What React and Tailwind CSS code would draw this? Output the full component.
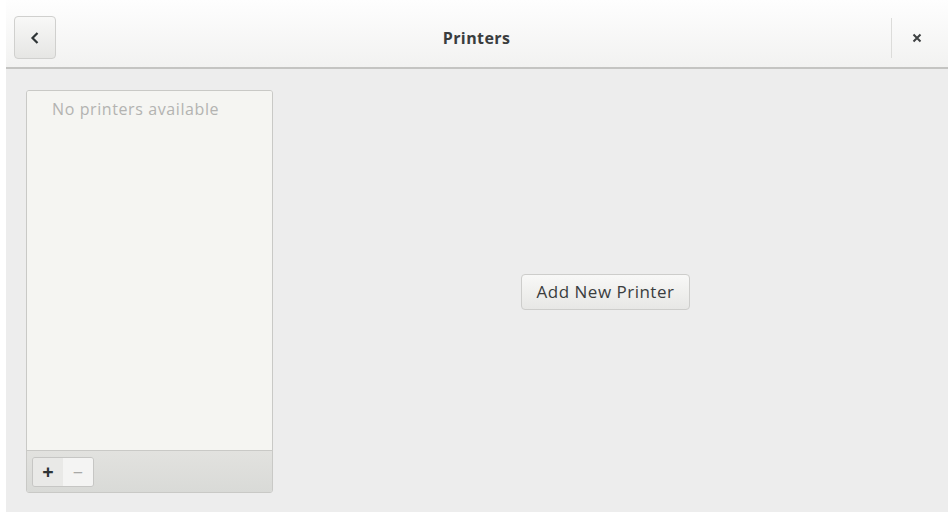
import React from "react";

function BackIcon() {
  return (
    <svg width="10" height="14" viewBox="0 0 10 14">
      <path d="M7.5 2 L2.5 7 L7.5 12" fill="none" stroke="#2e3436" strokeWidth="2.2" />
    </svg>
  );
}

function CloseIcon() {
  return (
    <svg width="10" height="10" viewBox="0 0 10 10">
      <path d="M1.5 1.5 L8.5 8.5 M8.5 1.5 L1.5 8.5" stroke="#3f4243" strokeWidth="2" />
    </svg>
  );
}

export default function App() {
  return (
    <div
      className="w-[948px] h-[512px] bg-white overflow-hidden flex"
      style={{ fontFamily: '"Open Sans", "Noto Sans", sans-serif' }}
    >
      <div className="ml-[6px] flex-1 flex flex-col">
        {/* header bar */}
        <div className="h-[69px] shrink-0 flex items-center pt-[8px] bg-gradient-to-b from-[#fefefe] to-[#f2f2f1] border-b-2 border-[#c4c4c2]">
          <div className="ml-[8px] w-[42px] h-[43px] rounded-[4px] border border-[#d0d0ce] bg-gradient-to-b from-[#f8f8f7] to-[#e6e6e4] flex items-center justify-center">
            <BackIcon />
          </div>
          <div className="flex-1 text-center text-[16px] tracking-[0.4px] font-bold text-[#3a3d3e] pl-[6px]">Printers</div>
          <div className="w-px h-[40px] bg-[#dcdcda]" />
          <div className="w-[56px] flex items-center justify-center pr-[6px]">
            <CloseIcon />
          </div>
        </div>
        {/* content */}
        <div className="flex-1 bg-[#ededed] flex pt-[21px] pb-[19px] pl-[20px]">
          <div className="w-[247px] flex flex-col border border-[#c9c9c6] rounded-[3px] overflow-hidden">
            <div className="flex-1 bg-[#f5f5f2] pt-[6px] pl-[25px] text-left text-[16px] tracking-[0.6px] text-[#b3b3b1]">
              No printers available
            </div>
            <div className="h-[42px] bg-gradient-to-b from-[#e2e2df] to-[#d9dad7] border-t border-[#c9c9c6] flex items-center pl-[5px]">
              <div className="flex h-[30px] rounded-[3px] border border-[#c6c6c4] overflow-hidden">
                <div className="w-[30px] flex items-center justify-center bg-[#e9e9e7] text-[20px] font-bold text-[#2e3436] leading-none">
                  +
                </div>
                <div className="w-[30px] flex items-center justify-center bg-[#f4f4f3] text-[18px] text-[#a8a8a6] leading-none">
                  −
                </div>
              </div>
            </div>
          </div>
          <div className="flex-1 flex items-center justify-center pr-[10px]">
            <div className="h-[36px] w-[169px] flex items-center justify-center rounded-[4px] border border-[#cdcdcb] bg-gradient-to-b from-[#f8f8f7] to-[#e7e7e5] text-[17px] tracking-[0.5px] text-[#3a3d3e]">
              Add New Printer
            </div>
          </div>
        </div>
      </div>
    </div>
  );
}
